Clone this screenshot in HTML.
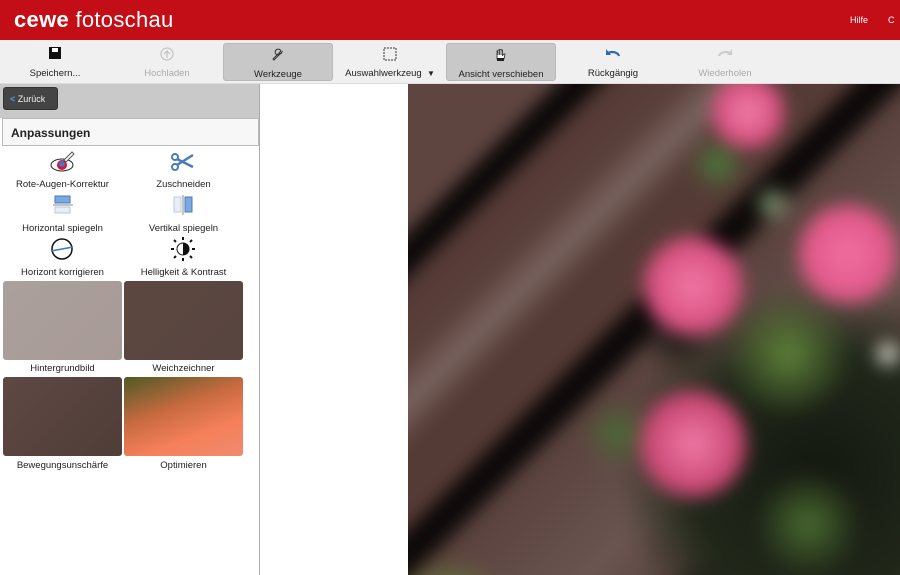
<!DOCTYPE html>
<html style="overflow:hidden"><head><meta charset="utf-8"><style>
*{margin:0;padding:0;box-sizing:border-box}
body{width:900px;height:575px;overflow:hidden;font-family:"Liberation Sans",Verdana,sans-serif;background:#fff;position:relative}
.hdr{position:absolute;left:0;top:0;width:900px;height:40px;background:#c30d17;color:#fff}
.logo{position:absolute;left:14px;top:7px;font-size:22px;letter-spacing:0.3px}
.logo b{font-weight:bold}
.hilfe{position:absolute;left:850px;top:15px;font-size:9px}
.tb{position:absolute;left:0;top:40px;width:900px;height:44px;background:#f0f0f0;border-bottom:1px solid #ddd}
.btn{position:absolute;top:3px;height:38px;font-size:9.5px;color:#222;text-align:center}
.btn .l{position:absolute;left:0;right:0;top:25px}
.btn.sel{background:#c8c8c8;border:1px solid #b8b8b8;border-radius:3px}
.btn.dis{color:#aaa}
.ic{position:absolute;left:50%;top:4px;transform:translateX(-50%)}
.left{position:absolute;left:0;top:84px;width:260px;height:491px;background:#fff;border-right:1px solid #aaa;overflow:hidden}
.gray{position:absolute;left:0;top:0;width:260px;height:34px;background:#c9c9c9}
.back{position:absolute;left:3px;top:3px;width:55px;height:23px;background:#444;border:1px solid #333;border-radius:3px;color:#eee;font-size:9px;padding:6px 0 0 6px}
.back span{color:#4a9ce8;font-weight:bold}
.ph{position:absolute;left:2px;top:34px;width:257px;height:28px;background:#f7f7f7;border:1px solid #bbb;font-weight:bold;font-size:12px;padding:7px 8px;color:#222}
.it{position:absolute;width:121px;text-align:center;font-size:9.5px;color:#222}
.th{position:absolute;width:119px;height:79px;border-radius:3px}
.tl{position:absolute;width:121px;text-align:center;font-size:9.5px;color:#222}
.photo{position:absolute;left:408px;top:84px;width:492px;height:491px;overflow:hidden;background:#5a403b}
</style></head><body>
<div class="hdr"><div class="logo"><b>cewe</b> fotoschau</div><div class="hilfe">Hilfe &nbsp;&nbsp;&nbsp;&nbsp;&nbsp;&nbsp;&nbsp;C</div></div>
<div class="tb">
<div class="btn" style="left:0;width:110px"><svg class="ic" width="12" height="12"><rect x="0" y="0" width="12" height="12" fill="#111"/><rect x="3" y="1" width="6" height="4" fill="#fff"/></svg><div class="l">Speichern...</div></div>
<div class="btn dis" style="left:112px;width:110px"><svg class="ic" width="14" height="14"><circle cx="7" cy="7" r="6" fill="none" stroke="#bbb"/><path d="M7 11V4M4 7l3-3 3 3" stroke="#bbb" fill="none"/></svg><div class="l">Hochladen</div></div>
<div class="btn sel" style="left:223px;width:110px"><svg class="ic" width="14" height="14"><path d="M3 12l5-5a3 3 0 1 1 2-4l-2 2 1 1 2-2a3 3 0 0 1-4 2l-5 5z" fill="none" stroke="#333"/></svg><div class="l">Werkzeuge</div></div>
<div class="btn" style="left:336px;width:108px"><svg class="ic" width="14" height="14"><rect x="1" y="1" width="12" height="12" fill="none" stroke="#333" stroke-dasharray="2 1"/></svg><div class="l">Auswahlwerkzeug &nbsp;<span style="font-size:8px">▼</span></div></div>
<div class="btn sel" style="left:446px;width:110px"><svg class="ic" width="12" height="14"><path d="M2 7V3h1v4V2h1.5v5V1.5H6V7V2h1.5v6l1-2h1.5L9 11H2z" fill="#fff" stroke="#222" stroke-width=".8"/><rect x="2" y="10" width="7" height="3" fill="#222"/></svg><div class="l">Ansicht verschieben</div></div>
<div class="btn" style="left:558px;width:110px"><svg class="ic" width="16" height="12"><path d="M3 6a7 5 0 0 1 11 3" stroke="#2a6ab4" stroke-width="2.2" fill="none"/><path d="M1 2v6h5z" fill="#2a6ab4"/></svg><div class="l">Rückgängig</div></div>
<div class="btn dis" style="left:670px;width:110px"><svg class="ic" width="16" height="12"><path d="M13 6a7 5 0 0 0-11 3" stroke="#ccc" stroke-width="2.2" fill="none"/><path d="M15 2v6h-5z" fill="#ccc"/></svg><div class="l">Wiederholen</div></div>
</div>
<div class="left">
<div class="gray"><div class="back"><span>&lt;</span> Zurück</div></div>
<div class="ph">Anpassungen</div>
<svg style="position:absolute;left:50px;top:66px" width="26" height="24"><ellipse cx="12" cy="15" rx="11" ry="6" fill="#fff" stroke="#222"/><circle cx="12" cy="15" r="5" fill="#e0102a"/><circle cx="12" cy="14" r="3" fill="#3c78d0"/><path d="M14 10l8-8 2 2-8 8z" fill="#fff" stroke="#555"/></svg>
<div class="it" style="left:2px;top:95px">Rote-Augen-Korrektur</div>
<svg style="position:absolute;left:170px;top:68px" width="26" height="20"><circle cx="5" cy="5" r="3" fill="none" stroke="#4a7ab8" stroke-width="2"/><circle cx="5" cy="15" r="3" fill="none" stroke="#4a7ab8" stroke-width="2"/><path d="M7 7l16 8M7 13l16-10" stroke="#4a7ab8" stroke-width="2.5"/></svg>
<div class="it" style="left:123px;top:95px">Zuschneiden</div>
<svg style="position:absolute;left:52px;top:111px" width="22" height="20"><rect x="3" y="1" width="15" height="7" fill="#7aa8e0" stroke="#4a7ab8"/><path d="M1 10h20" stroke="#888"/><rect x="3" y="12" width="15" height="6" fill="#e8eef8" stroke="#b8c8e0"/></svg>
<div class="it" style="left:2px;top:139px">Horizontal spiegeln</div>
<svg style="position:absolute;left:173px;top:111px" width="22" height="20"><rect x="1" y="2" width="7" height="15" fill="#e8eef8" stroke="#b8c8e0"/><path d="M10 0v20" stroke="#888"/><rect x="12" y="2" width="7" height="15" fill="#7aa8e0" stroke="#4a7ab8"/></svg>
<div class="it" style="left:123px;top:139px">Vertikal spiegeln</div>
<svg style="position:absolute;left:50px;top:153px" width="24" height="24"><circle cx="12" cy="12" r="10" fill="#fff" stroke="#111" stroke-width="1.5"/><path d="M1 14l22-4" stroke="#3c78d0" stroke-width="1.5"/></svg>
<div class="it" style="left:2px;top:183px">Horizont korrigieren</div>
<svg style="position:absolute;left:171px;top:153px" width="24" height="24"><circle cx="12" cy="12" r="6" fill="#fff" stroke="#111"/><path d="M12 6a6 6 0 0 1 0 12z" fill="#111"/><g stroke="#111" stroke-width="2"><path d="M12 0v3M12 21v3M0 12h3M21 12h3M3 3l2 2M19 19l2 2M3 21l2-2M19 5l2-2"/></g></svg>
<div class="it" style="left:123px;top:183px">Helligkeit &amp; Kontrast</div>
<div class="th" style="left:3px;top:197px;background:linear-gradient(135deg,#aaa09c,#a89a97)"></div>
<div class="th" style="left:124px;top:197px;background:linear-gradient(135deg,#5d4640,#584540)"></div>
<div class="tl" style="left:2px;top:279px">Hintergrundbild</div>
<div class="tl" style="left:123px;top:279px">Weichzeichner</div>
<div class="th" style="left:3px;top:293px;background:linear-gradient(135deg,#5f4843,#4f3d38)"></div>
<div class="th" style="left:124px;top:293px;background:linear-gradient(160deg,#4f5a25 0%,#c86a40 40%,#f5805a 70%,#f08a70 100%)"></div>
<div class="tl" style="left:2px;top:376px">Bewegungsunschärfe</div>
<div class="tl" style="left:123px;top:376px">Optimieren</div>
</div>
<div class="photo">
<div style="position:absolute;left:-60px;top:-60px;width:612px;height:611px;filter:blur(8px);background:
radial-gradient(circle at 400px 88px,#f080a8 0,#d85080 30px,transparent 42px),
radial-gradient(circle at 500px 230px,#f070a0 0,#e05888 42px,transparent 56px),
radial-gradient(circle at 345px 262px,#f078a4 0,#d85080 42px,transparent 56px),
radial-gradient(circle at 345px 420px,#f07aa6 0,#c84672 46px,transparent 60px),
radial-gradient(circle at 370px 140px,#4a7a3a 0,transparent 30px),
radial-gradient(circle at 425px 180px,#8aa07a 0,transparent 22px),
radial-gradient(circle at 440px 330px,#5e8038 0,transparent 65px),
radial-gradient(circle at 460px 500px,#4a6a30 0,transparent 55px),
radial-gradient(circle at 270px 410px,#4a6a35 0,transparent 35px),
radial-gradient(circle at 100px 590px,#6a8a3a 0,transparent 60px),
radial-gradient(circle at 540px 330px,#e8e8e0 0,transparent 18px),
radial-gradient(ellipse at 470px 450px,#141810 0,#20281a 130px,transparent 200px),
radial-gradient(circle at 330px 310px,#151510 0,transparent 40px),
linear-gradient(135deg,#5e4540 0 185px,#0c0908 195px 215px,#553a35 228px,#5a403b 280px,#7a6560 311px,#553b36 340px,#553b36 395px,#0c0908 405px 428px,#5a423d 442px,#6a5550 560px,#5a4540 620px,#2a1f1d 640px 660px,#5e4540 680px)"></div>
</div>
</body></html>
